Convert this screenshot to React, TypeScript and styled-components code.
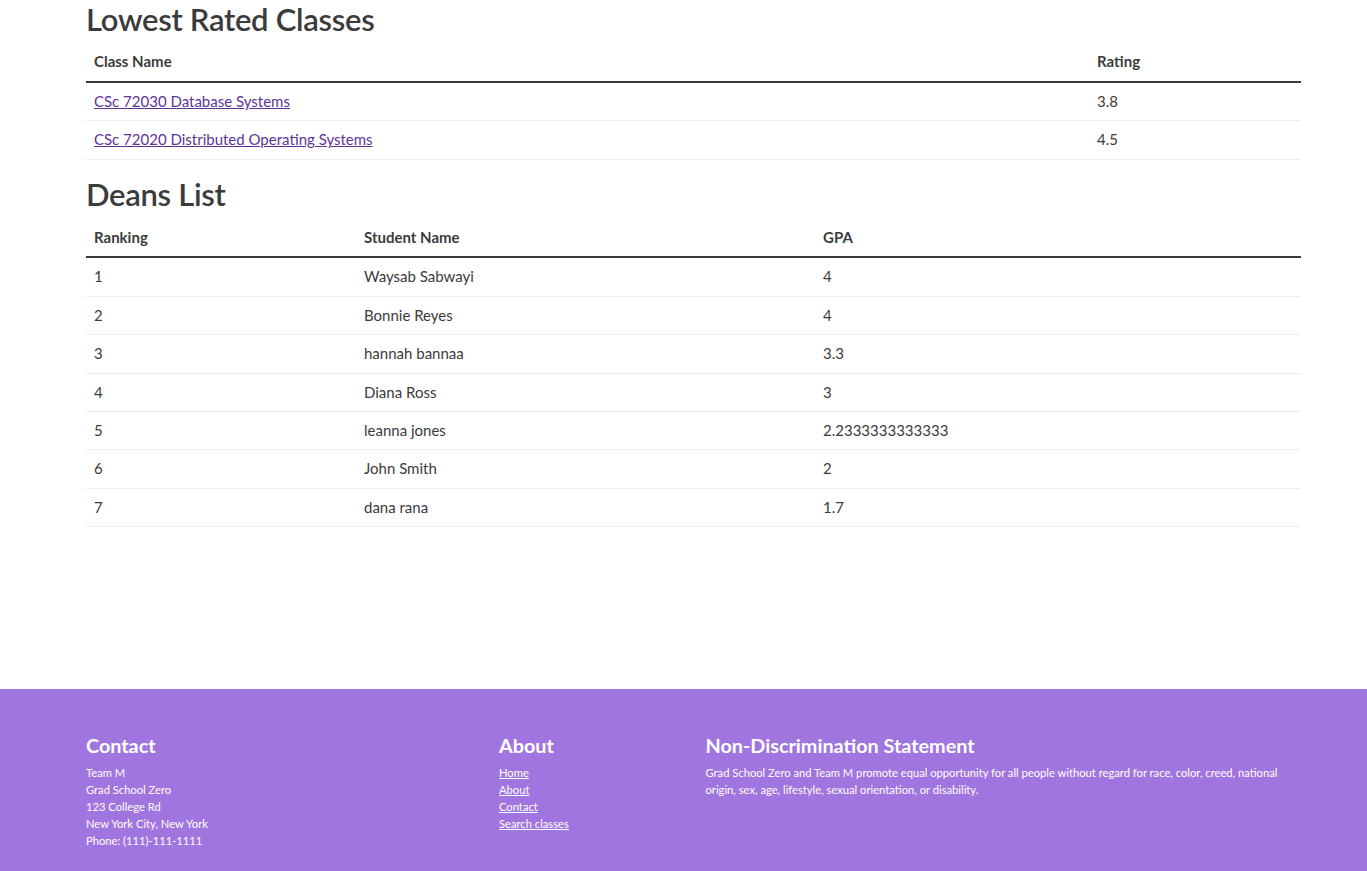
import React from "react";
import styled, { createGlobalStyle } from "styled-components";

const Global = createGlobalStyle`
  html, body { margin: 0; padding: 0; background: #fff; }
  body {
    font-family: Lato, "Open Sans", "Liberation Sans", sans-serif;
    color: #3b3b3b;
    font-size: 15px;
  }
  * { box-sizing: border-box; }
`;

const Page = styled.div`
  min-height: 871px;
  display: flex;
  flex-direction: column;
`;

const Main = styled.main`
  padding: 0 66px 150px 86px;
`;

const SectionTitle = styled.h2<{ $first?: boolean }>`
  font-size: 31px;
  font-weight: 600;
  letter-spacing: -0.3px;
  line-height: 38.4px;
  margin: ${(p) => (p.$first ? "0 0 5px" : "15px 0 6px")};
  color: #3b3b3b;
`;

const Table = styled.table`
  width: 100%;
  border-collapse: collapse;
  table-layout: fixed;
`;

const Th = styled.th<{ $w?: number }>`
  text-align: left;
  font-weight: 700;
  padding: 8px;
  line-height: 21.4px;
  width: ${(p) => (p.$w ? `${p.$w}px` : "auto")};
  border-bottom: 2px solid #3b3b3b;
`;

const Td = styled.td`
  padding: 8px;
  line-height: 21.4px;
  border-bottom: 1px solid #ececec;
`;

const ClassLink = styled.a`
  color: #5b3597;
  text-decoration: underline;
`;

const Footer = styled.footer`
  background: #a175e0;
  color: #fff;
  padding: 44px 66px 22px 74px;
  display: grid;
  grid-template-columns: 413px 206.5px 1fr;
  margin-top: auto;
`;

const FooterCol = styled.div`
  padding: 0 12px;
`;

const FooterTitle = styled.h5`
  font-size: 19.8px;
  font-weight: 700;
  line-height: 24px;
  margin: 0 0 7px;
  color: #fff;
`;

const FooterText = styled.div`
  font-size: 11.2px;
  line-height: 17px;
`;

const FooterLink = styled.a`
  display: block;
  color: #fff;
  text-decoration: underline;
  font-size: 11.2px;
  line-height: 17px;
`;

const classes = [
  { name: "CSc 72030 Database Systems", rating: "3.8" },
  { name: "CSc 72020 Distributed Operating Systems", rating: "4.5" },
];

const deans = [
  ["1", "Waysab Sabwayi", "4"],
  ["2", "Bonnie Reyes", "4"],
  ["3", "hannah bannaa", "3.3"],
  ["4", "Diana Ross", "3"],
  ["5", "leanna jones", "2.2333333333333"],
  ["6", "John Smith", "2"],
  ["7", "dana rana", "1.7"],
];

export default function App() {
  return (
    <Page>
      <Global />
      <Main>
        <SectionTitle $first>Lowest Rated Classes</SectionTitle>
        <Table>
          <thead>
            <tr>
              <Th $w={1003}>Class Name</Th>
              <Th>Rating</Th>
            </tr>
          </thead>
          <tbody>
            {classes.map((c) => (
              <tr key={c.name}>
                <Td>
                  <ClassLink href="#">{c.name}</ClassLink>
                </Td>
                <Td>{c.rating}</Td>
              </tr>
            ))}
          </tbody>
        </Table>
        <SectionTitle>Deans List</SectionTitle>
        <Table>
          <thead>
            <tr>
              <Th $w={270}>Ranking</Th>
              <Th $w={459}>Student Name</Th>
              <Th>GPA</Th>
            </tr>
          </thead>
          <tbody>
            {deans.map((d) => (
              <tr key={d[0]}>
                <Td>{d[0]}</Td>
                <Td>{d[1]}</Td>
                <Td>{d[2]}</Td>
              </tr>
            ))}
          </tbody>
        </Table>
      </Main>
      <Footer>
        <FooterCol>
          <FooterTitle>Contact</FooterTitle>
          <FooterText>
            Team M<br />
            Grad School Zero<br />
            123 College Rd<br />
            New York City, New York<br />
            Phone: (111)-111-1111
          </FooterText>
        </FooterCol>
        <FooterCol>
          <FooterTitle>About</FooterTitle>
          <FooterLink href="#">Home</FooterLink>
          <FooterLink href="#">About</FooterLink>
          <FooterLink href="#">Contact</FooterLink>
          <FooterLink href="#">Search classes</FooterLink>
        </FooterCol>
        <FooterCol>
          <FooterTitle>Non-Discrimination Statement</FooterTitle>
          <FooterText>
            Grad School Zero and Team M promote equal opportunity for all people without regard for race, color, creed,
            national origin, sex, age, lifestyle, sexual orientation, or disability.
          </FooterText>
        </FooterCol>
      </Footer>
    </Page>
  );
}
